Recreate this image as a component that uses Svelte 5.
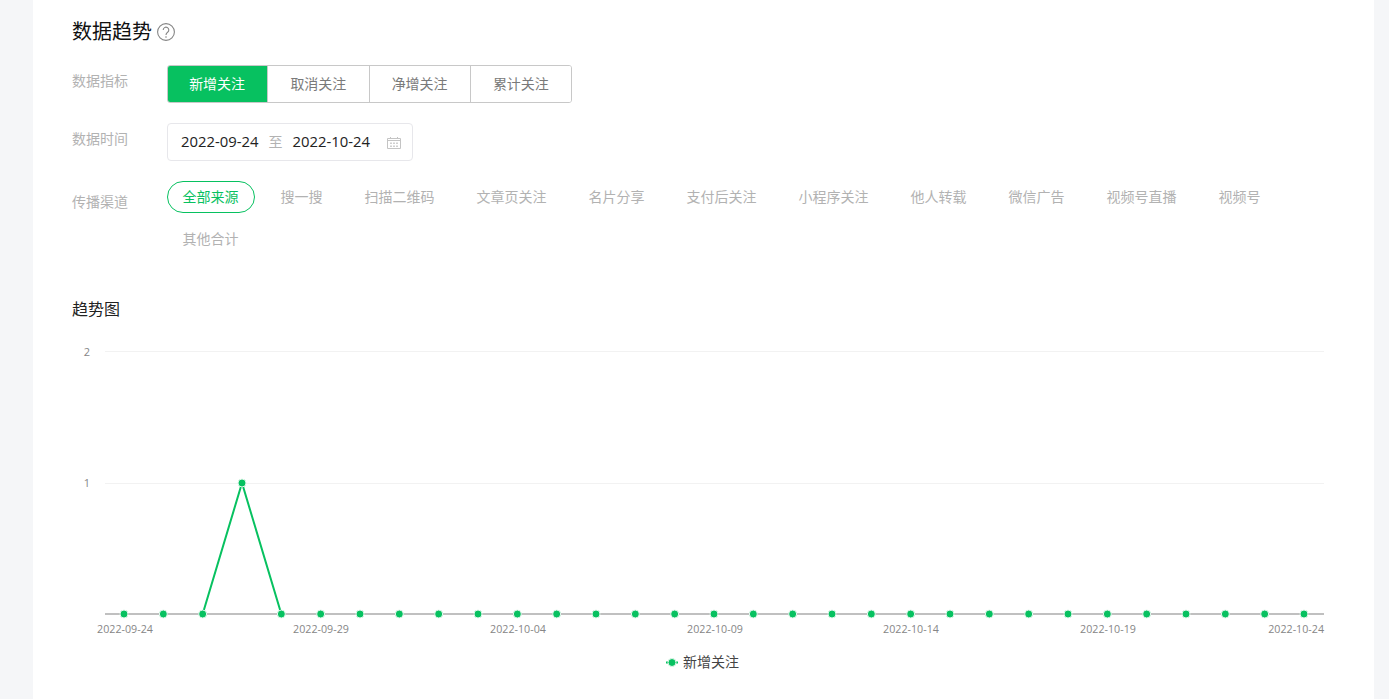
<script lang="ts">
  const metrics = ['新增关注', '取消关注', '净增关注', '累计关注'];
  const channels = [
    '全部来源', '搜一搜', '扫描二维码', '文章页关注', '名片分享', '支付后关注',
    '小程序关注', '他人转载', '微信广告', '视频号直播', '视频号', '其他合计'
  ];

  const step = 1180 / 30;
  const baseY = 284;
  const unit = 131;
  const values = Array.from({ length: 31 }, (_, i) => (i === 3 ? 1 : 0));
  const points = values.map((v, i) => ({ x: 124 - 72 + i * step, y: baseY - v * unit }));
  const linePoints = points.map((p) => `${p.x},${p.y}`).join(' ');

  const ticks = [
    { x: 53, label: '2022-09-24', anchor: 'middle' },
    { x: 249, label: '2022-09-29', anchor: 'middle' },
    { x: 446, label: '2022-10-04', anchor: 'middle' },
    { x: 643, label: '2022-10-09', anchor: 'middle' },
    { x: 839, label: '2022-10-14', anchor: 'middle' },
    { x: 1036, label: '2022-10-19', anchor: 'middle' },
    { x: 1252, label: '2022-10-24', anchor: 'end' }
  ];
</script>

<div class="page">
  <main class="card">
    <h2 class="title">
      数据趋势
      <svg class="help" width="18" height="18" viewBox="0 0 18 18" fill="none" aria-hidden="true">
        <circle cx="9" cy="9" r="8.4" stroke="#858585" stroke-width="1.1" />
        <path d="M6.2 7a2.8 2.8 0 1 1 4.4 2.3c-1 .7-1.6 1.2-1.6 2.6" stroke="#858585" stroke-width="1.1" />
        <circle cx="9" cy="14" r=".8" fill="#858585" />
      </svg>
    </h2>

    <div class="row">
      <span class="label">数据指标</span>
      <div class="segments">
        {#each metrics as metric, i}
          <button class="segment" class:active={i === 0}>{metric}</button>
        {/each}
      </div>
    </div>

    <div class="row">
      <span class="label">数据时间</span>
      <div class="range">
        <span class="date">2022-09-24</span>
        <span class="to">至</span>
        <span class="date">2022-10-24</span>
        <svg class="calendar" width="16" height="14" viewBox="0 0 16 14" fill="none" aria-hidden="true">
          <path d="M1.5 2.5h13v10h-13z" stroke="#c4c4c4" />
          <path d="M1.5 4.5h13" stroke="#c4c4c4" />
          <path d="M4.5 1v2M11.5 1v2" stroke="#c4c4c4" />
          <path d="M4 6.5h2v1.5h-2zM7 6.5h2v1.5h-2zM10 6.5h2v1.5h-2zM4 9.5h2v1.5h-2zM7 9.5h2v1.5h-2zM10 9.5h2v1.5h-2z" fill="#d0d0d0" />
        </svg>
      </div>
    </div>

    <div class="row">
      <span class="label channel-label">传播渠道</span>
      <div class="channels">
        {#each channels as channel, i}
          <span class="channel" class:active={i === 0}>{channel}</span>
        {/each}
      </div>
    </div>

    <h3 class="chart-title">趋势图</h3>

    <svg class="chart" width="1264" height="369" viewBox="0 0 1264 369">
      <line class="grid" x1="33" x2="1252" y1="21.5" y2="21.5" />
      <line class="grid" x1="33" x2="1252" y1="153.5" y2="153.5" />
      <text class="tick value" x="18" y="26" text-anchor="end">2</text>
      <text class="tick value" x="18" y="157" text-anchor="end">1</text>

      <polyline class="series" points={linePoints} />
      <line class="axis" x1="33" x2="1252" y1={baseY} y2={baseY} />

      {#each points as p}
        <circle class="dot" cx={p.x} cy={p.y} r="4" />
      {/each}

      {#each ticks as t}
        <text class="tick" x={t.x} y="303" text-anchor={t.anchor}>{t.label}</text>
      {/each}

      <line class="legend-line" x1="594" x2="606" y1="332.5" y2="332.5" />
      <circle class="dot" cx="600" cy="332.5" r="4" />
      <text class="legend" x="611" y="337">新增关注</text>
    </svg>
  </main>
</div>

<style>
  :global(body) {
    margin: 0;
    background: #f5f6f8;
    font-family: "Open Sans", "Noto Sans CJK SC", sans-serif;
  }

  .page {
    height: 699px;
    padding: 0 15px 0 33px;
    overflow: hidden;
  }

  .card {
    height: 699px;
    box-sizing: border-box;
    padding: 18px 38px 0 39px;
    background: #fff;
  }

  .title {
    display: flex;
    align-items: center;
    gap: 5px;
    height: 28px;
    margin: 0 0 19px;
    font-size: 20px;
    font-weight: 400;
    line-height: 28px;
    color: #111;
  }

  .row {
    display: grid;
    grid-template-columns: 95px 1fr;
    margin-bottom: 20px;
  }

  .label {
    padding-top: 6px;
    font-size: 14px;
    line-height: 20px;
    color: #b2b2b2;
  }

  .channel-label {
    padding-top: 11px;
  }

  .segments {
    display: flex;
    width: 405px;
    height: 38px;
    box-sizing: border-box;
    border: 1px solid #c8c8c8;
    border-radius: 3px;
    overflow: hidden;
  }

  .segment {
    flex: 1;
    padding: 0 0 2px;
    border: none;
    border-left: 1px solid #c8c8c8;
    background: #fff;
    font: inherit;
    font-size: 14px;
    color: #7a7a7a;
  }

  .segment:first-child {
    border-left: none;
  }

  .segment.active {
    margin: -1px 0 -1px -1px;
    background: #07c160;
    color: #fff;
  }

  .range {
    display: flex;
    align-items: center;
    width: 246px;
    height: 38px;
    box-sizing: border-box;
    padding: 0 10px 2px 13px;
    border: 1px solid #e7e7eb;
    border-radius: 4px;
    font-size: 14.85px;
    color: #222;
  }

  .to {
    margin: 0 10px;
    font-size: 14px;
    color: #b2b2b2;
  }

  .calendar {
    margin: 2px 0 -2px auto;
  }

  .channels {
    display: flex;
    flex-wrap: wrap;
    gap: 10px;
  }

  .channel {
    box-sizing: border-box;
    height: 32px;
    padding: 0 15.5px 0 14.5px;
    border: 1px solid transparent;
    border-radius: 16px;
    font-size: 14px;
    line-height: 30px;
    color: #b2b2b2;
  }

  .channel.active {
    border-color: #07c160;
    color: #07c160;
  }

  .chart-title {
    height: 24px;
    margin: 42px 0 9px;
    font-size: 16px;
    font-weight: 400;
    line-height: 24px;
    color: #222;
  }

  .chart {
    display: block;
  }

  .grid {
    stroke: #f2f2f2;
  }

  .axis {
    stroke: #c0c0c0;
    stroke-width: 2;
  }

  .series {
    fill: none;
    stroke: #07c160;
    stroke-width: 2;
  }

  .dot {
    fill: #07c160;
    stroke: #e2f7ec;
    stroke-width: 1;
  }

  .tick {
    font-size: 10.7px;
    fill: #868686;
  }

  .tick.value {
    font-size: 11px;
  }

  .legend {
    font-size: 14px;
    fill: #444;
  }

  .legend-line {
    stroke: #07c160;
    stroke-width: 2;
    stroke-dasharray: 2 8 2;
  }
</style>
